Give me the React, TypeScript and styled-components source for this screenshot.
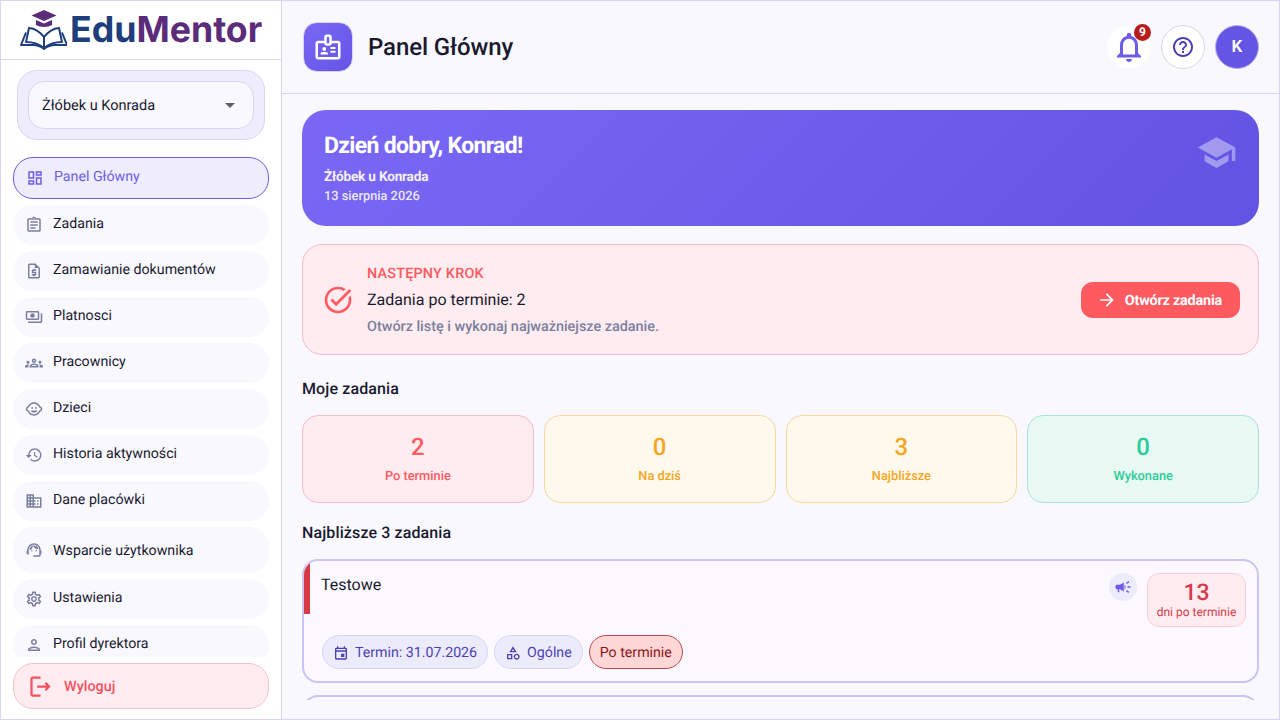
import React from "react";
import styled, { createGlobalStyle } from "styled-components";
import {
  MdOutlineDashboard,
  MdOutlineAssignment,
  MdOutlineRequestQuote,
  MdOutlinePayments,
  MdOutlineGroups,
  MdOutlineChildCare,
  MdOutlineHistory,
  MdBusiness,
  MdOutlineSupportAgent,
  MdOutlineSettings,
  MdOutlinePerson,
  MdOutlineLogout,
  MdOutlineBadge,
  MdOutlineNotifications,
  MdOutlineHelpOutline,
  MdSchool,
  MdOutlineTaskAlt,
  MdArrowForward,
  MdCampaign,
  MdOutlineEvent,
  MdOutlineCategory,
  MdArrowDropDown,
} from "react-icons/md";

const GlobalStyle = createGlobalStyle`
  html, body {
    margin: 0;
    padding: 0;
    height: 100%;
    overflow: hidden;
    background: #f9f8ff;
    font-family: Roboto, "Noto Sans", sans-serif;
    color: #1a1a2e;
    text-rendering: geometricPrecision;
  }
  * { box-sizing: border-box; }
`;

const Shell = styled.div`
  display: flex;
  width: 1280px;
  height: 720px;
  border: 1px solid #d8d5f3;
  overflow: hidden;
`;

const Sidebar = styled.aside`
  display: flex;
  flex-direction: column;
  flex: 0 0 281px;
  height: 100%;
  background: #fff;
  border-right: 1px solid #d8d5f3;
`;

const LogoBar = styled.div`
  display: flex;
  align-items: center;
  gap: 3px;
  height: 59px;
  padding-left: 18px;
  border-bottom: 1px solid #d8d5f3;
`;

const LogoText = styled.span`
  font-family: Inter, sans-serif;
  font-size: 35.7px;
  font-weight: 700;
  line-height: 1;
  color: #1f3f7c;
`;

const LogoAccent = styled.span`
  color: #5b2c7a;
`;

const SchoolBox = styled.div`
  margin: 10px 16px 0;
  padding: 10px;
  background: #efedfc;
  border: 1px solid #d8d5f3;
  border-radius: 20px;
`;

const SchoolSelect = styled.div`
  display: flex;
  align-items: center;
  justify-content: space-between;
  height: 48px;
  padding: 0 11px 0 13px;
  background: #f9f8ff;
  border: 1px solid #d8d5f3;
  border-radius: 16px;
  font-size: 14.5px;
  color: #1a1a2e;
  svg { color: #5f5f6b; }
`;

const Nav = styled.nav`
  display: flex;
  flex-direction: column;
  gap: 6px;
  height: 500px;
  margin-top: 17px;
  padding: 0 12px;
  overflow: hidden;
`;

const NavItem = styled.div<{ $active?: boolean; $tall?: boolean }>`
  display: flex;
  flex: 0 0 auto;
  align-items: center;
  gap: 10px;
  height: ${(p) => (p.$active ? 42 : p.$tall ? 46 : 40)}px;
  padding-left: 12px;
  border-radius: 20px;
  background: ${(p) => (p.$active ? "#efedfc" : "#f9f8ff")};
  border: ${(p) => (p.$active ? "1px solid #6c5ce7" : "none")};
  color: ${(p) => (p.$active ? "#6c5ce7" : "#1a1a2e")};
  font-size: 14.2px;
  svg {
    flex: 0 0 18px;
    color: ${(p) => (p.$active ? "#6c5ce7" : "#7b7f9e")};
  }
`;

const NavLabel = styled.span<{ $tall?: boolean }>`
  position: relative;
  top: ${(p) => (p.$tall ? 1 : -1)}px;
`;

const Logout = styled.div`
  display: flex;
  align-items: center;
  gap: 10px;
  height: 46px;
  margin: 6px 12px 0;
  padding-left: 13px;
  background: #feecf0;
  border: 1px solid #f5c2c9;
  border-radius: 20px;
  color: #f4525e;
  font-size: 14.4px;
  font-weight: 500;
`;

const Main = styled.main`
  display: flex;
  flex-direction: column;
  flex: 1;
  min-width: 0;
`;

const Header = styled.header`
  display: flex;
  flex: 0 0 93px;
  align-items: center;
  justify-content: space-between;
  padding: 0 20px 0 21px;
  border-bottom: 1px solid #d8d5f3;
`;

const TitleGroup = styled.div`
  display: flex;
  align-items: center;
  gap: 15px;
`;

const TitleIcon = styled.div`
  display: flex;
  align-items: center;
  justify-content: center;
  width: 50px;
  height: 50px;
  border-radius: 14px;
  background: linear-gradient(135deg, #7a68f5, #6555e5);
  border: 1px solid #d8d5f3;
  color: #fff;
`;

const Title = styled.h1`
  margin: 0;
  font-size: 24px;
  font-weight: 500;
  letter-spacing: -0.1px;
  color: #1a1a2e;
`;

const HeaderActions = styled.div`
  display: flex;
  align-items: center;
  gap: 10px;
`;

const RoundButton = styled.div<{ $bordered?: boolean }>`
  position: relative;
  display: flex;
  align-items: center;
  justify-content: center;
  width: 44px;
  height: 44px;
  border-radius: 50%;
  background: #fff;
  border: 1px solid ${(p) => (p.$bordered ? "#d8d5f3" : "#fff")};
  color: ${(p) => (p.$bordered ? "#4a3fb5" : "#6c5ce7")};
`;

const Badge = styled.span`
  position: absolute;
  top: -2px;
  right: -1px;
  width: 17px;
  height: 17px;
  border-radius: 50%;
  background: #b71c1c;
  color: #fff;
  font-size: 12px;
  font-weight: 700;
  line-height: 17px;
  text-align: center;
`;

const Avatar = styled.div`
  display: flex;
  align-items: center;
  justify-content: center;
  width: 44px;
  height: 44px;
  border-radius: 50%;
  background: #6555e5;
  border: 1px solid #b8b0f0;
  color: #fff;
  font-size: 17px;
  font-weight: 600;
`;

const Content = styled.div`
  display: flex;
  flex-direction: column;
  height: 590px;
  margin-top: 16px;
  padding: 0 20px;
  overflow: hidden;
`;

const Hero = styled.section`
  display: flex;
  flex: 0 0 116px;
  justify-content: space-between;
  padding: 21px 22px 20px;
  border-radius: 24px;
  background: linear-gradient(135deg, #7a68f5, #6353e3);
  color: #fff;
`;

const HeroTitle = styled.h2`
  margin: 0 0 7px;
  font-size: 23px;
  font-weight: 700;
  line-height: 30px;
  letter-spacing: -0.69px;
`;

const HeroLine = styled.div<{ $strong?: boolean }>`
  font-size: ${(p) => (p.$strong ? 13.6 : 12.8)}px;
  font-weight: ${(p) => (p.$strong ? 700 : 500)};
  line-height: 19px;
  letter-spacing: ${(p) => (p.$strong ? -0.2 : 0)}px;
  opacity: ${(p) => (p.$strong ? 0.92 : 0.85)};
`;

const HeroIcon = styled.div`
  margin: 1px 0 0 0;
  color: rgba(255, 255, 255, 0.4);
`;

const NextStep = styled.section`
  display: flex;
  flex: 0 0 111px;
  align-items: center;
  margin-top: 18px;
  padding: 0 18px 0 19px;
  background: #feecf0;
  border: 1px solid #f7bcc6;
  border-radius: 20px;
`;

const NextIcon = styled.div`
  display: flex;
  color: #ff5a5f;
`;

const NextBody = styled.div`
  flex: 1;
  margin-left: 13px;
  padding-top: 2px;
`;

const NextLabel = styled.div`
  font-size: 14.4px;
  font-weight: 500;
  letter-spacing: 0.2px;
  line-height: 20px;
  color: #ff5a5f;
`;

const NextTitle = styled.div`
  margin-top: 6px;
  font-size: 16px;
  line-height: 20px;
  color: #1a1a2e;
`;

const NextHint = styled.div`
  margin-top: 7px;
  font-size: 14.4px;
  font-weight: 500;
  line-height: 20px;
  color: #7b7f9e;
`;

const OpenButton = styled.div`
  display: flex;
  align-items: center;
  gap: 8px;
  height: 36px;
  padding: 1px 18px 0 16px;
  border-radius: 12px;
  background: #ff5a5f;
  color: #fff;
  font-size: 14.4px;
  font-weight: 700;
  letter-spacing: -0.2px;
`;

const SectionTitle = styled.h3<{ $top: number }>`
  margin: ${(p) => p.$top}px 0 15px;
  font-size: 16px;
  font-weight: 500;
  letter-spacing: 0.12px;
  line-height: 22px;
  color: #1a1a2e;
`;

const StatGrid = styled.div`
  display: grid;
  flex: 0 0 88px;
  grid-template-columns: repeat(4, 1fr);
  gap: 10px;
`;

const StatCard = styled.div<{ $bg: string; $line: string; $color: string }>`
  display: flex;
  flex-direction: column;
  align-items: center;
  padding-top: 17px;
  border-radius: 16px;
  background: ${(p) => p.$bg};
  border: 1px solid ${(p) => p.$line};
  color: ${(p) => p.$color};
`;

const StatValue = styled.div`
  font-size: 24px;
  font-weight: 500;
  line-height: 28px;
`;

const StatLabel = styled.div`
  margin-top: 8px;
  font-size: 12.8px;
  font-weight: 500;
  line-height: 16px;
`;

const TaskCard = styled.article`
  position: relative;
  flex: 0 0 124px;
  margin-bottom: 12px;
  padding: 12px 11px 0 17px;
  background: #fbf9ff;
  border: 2px solid #c9c4f2;
  border-radius: 16px;
  overflow: hidden;
`;

const TaskStripe = styled.span<{ $color: string }>`
  position: absolute;
  top: 0;
  left: 0;
  width: 6px;
  height: 53px;
  background: ${(p) => p.$color};
`;

const TaskTop = styled.div`
  display: flex;
  align-items: flex-start;
`;

const TaskName = styled.div`
  flex: 1;
  margin-top: 2px;
  font-size: 16px;
  line-height: 20px;
  color: #1a1a2e;
`;

const TaskKind = styled.div`
  display: flex;
  align-items: center;
  justify-content: center;
  width: 28px;
  height: 28px;
  margin-right: 10px;
  border-radius: 50%;
  background: #ecebfb;
  color: #6c5ce7;
`;

const Overdue = styled.div`
  display: flex;
  flex-direction: column;
  align-items: center;
  width: 99px;
  height: 54px;
  padding-top: 7px;
  background: #feecf0;
  border: 1px solid #f9ced3;
  border-radius: 12px;
  color: #d63a4a;
`;

const OverdueValue = styled.div`
  font-size: 23px;
  font-weight: 500;
  line-height: 24px;
`;

const OverdueLabel = styled.div`
  font-size: 12px;
  line-height: 14px;
`;

const ChipRow = styled.div`
  display: flex;
  gap: 6px;
  margin: 8px 0 0 1px;
`;

const Chip = styled.div<{ $danger?: boolean }>`
  display: flex;
  align-items: center;
  gap: 6px;
  height: 34px;
  padding: 1px 10px 0;
  border-radius: 17px;
  background: ${(p) => (p.$danger ? "#ffd6d6" : "#ecebfb")};
  border: 1px solid ${(p) => (p.$danger ? "#b8484d" : "#d8d5f3")};
  color: ${(p) => (p.$danger ? "#8e1414" : "#4a3fb5")};
  font-size: 14.2px;
`;

const navItems = [
  { label: "Zadania", icon: MdOutlineAssignment },
  { label: "Zamawianie dokumentów", icon: MdOutlineRequestQuote },
  { label: "Platnosci", icon: MdOutlinePayments },
  { label: "Pracownicy", icon: MdOutlineGroups },
  { label: "Dzieci", icon: MdOutlineChildCare },
  { label: "Historia aktywności", icon: MdOutlineHistory },
  { label: "Dane placówki", icon: MdBusiness },
  { label: "Wsparcie użytkownika", icon: MdOutlineSupportAgent, tall: true },
  { label: "Ustawienia", icon: MdOutlineSettings },
  { label: "Profil dyrektora", icon: MdOutlinePerson },
];

const stats = [
  { value: "2", label: "Po terminie", bg: "#feecf0", line: "#f7bcc6", color: "#ff5a5f" },
  { value: "0", label: "Na dziś", bg: "#fff8ec", line: "#f5d9a0", color: "#f5a623" },
  { value: "3", label: "Najbliższe", bg: "#fff8ec", line: "#f5d9a0", color: "#f5a623" },
  { value: "0", label: "Wykonane", bg: "#e8f8f3", line: "#a9e5d3", color: "#2ecc9a" },
];

const LogoMark = () => (
  <svg width="48" height="40" viewBox="0 0 48 40" fill="none">
    <path d="M25 0l12.500 5.500-12.500 5.500-12.500-5.500z" fill="#5b2c7a" />
    <path d="M17 10v5c4 2.500 12 2.500 16 0v-5l-8 3.500z" fill="#5b2c7a" />
    <path
      d="M25 27c-4-5-9-8.500-15-9l-3 14c7 0 13 2 18 6 5-4 11-6 18-6l-3-14c-6 .5-11 4-15 9zM25 27v11"
      stroke="#1f3f7c"
      strokeWidth="2"
      strokeLinejoin="round"
    />
    <path
      d="M7 22.500l-5 12.500h12c4 0 8 1.500 11 4 3-2.500 7-4 11-4h12l-5-12.500"
      stroke="#1f3f7c"
      strokeWidth="2"
      strokeLinejoin="round"
    />
  </svg>
);

export default function App() {
  return (
    <>
      <GlobalStyle />
      <Shell>
        <Sidebar>
          <LogoBar>
            <LogoMark />
            <LogoText>
              Edu<LogoAccent>Mentor</LogoAccent>
            </LogoText>
          </LogoBar>
          <SchoolBox>
            <SchoolSelect>
              Żłóbek u Konrada
              <MdArrowDropDown size={24} />
            </SchoolSelect>
          </SchoolBox>
          <Nav>
            <NavItem $active>
              <MdOutlineDashboard size={18} />
              <NavLabel>Panel Główny</NavLabel>
            </NavItem>
            {navItems.map(({ label, icon: Icon, tall }) => (
              <NavItem key={label} $tall={tall}>
                <Icon size={18} />
                <NavLabel $tall={tall}>{label}</NavLabel>
              </NavItem>
            ))}
          </Nav>
          <Logout>
            <MdOutlineLogout size={27} />
            Wyloguj
          </Logout>
        </Sidebar>
        <Main>
          <Header>
            <TitleGroup>
              <TitleIcon>
                <MdOutlineBadge size={30} />
              </TitleIcon>
              <Title>Panel Główny</Title>
            </TitleGroup>
            <HeaderActions>
              <RoundButton>
                <MdOutlineNotifications size={36} />
                <Badge>9</Badge>
              </RoundButton>
              <RoundButton $bordered>
                <MdOutlineHelpOutline size={24} />
              </RoundButton>
              <Avatar>K</Avatar>
            </HeaderActions>
          </Header>
          <Content>
            <Hero>
              <div>
                <HeroTitle>Dzień dobry, Konrad!</HeroTitle>
                <HeroLine $strong>Żłóbek u Konrada</HeroLine>
                <HeroLine>13 sierpnia 2026</HeroLine>
              </div>
              <HeroIcon>
                <MdSchool size={41} />
              </HeroIcon>
            </Hero>
            <NextStep>
              <NextIcon>
                <MdOutlineTaskAlt size={32} />
              </NextIcon>
              <NextBody>
                <NextLabel>NASTĘPNY KROK</NextLabel>
                <NextTitle>Zadania po terminie: 2</NextTitle>
                <NextHint>Otwórz listę i wykonaj najważniejsze zadanie.</NextHint>
              </NextBody>
              <OpenButton>
                <MdArrowForward size={20} />
                Otwórz zadania
              </OpenButton>
            </NextStep>
            <SectionTitle $top={23}>Moje zadania</SectionTitle>
            <StatGrid>
              {stats.map((s) => (
                <StatCard key={s.label} $bg={s.bg} $line={s.line} $color={s.color}>
                  <StatValue>{s.value}</StatValue>
                  <StatLabel>{s.label}</StatLabel>
                </StatCard>
              ))}
            </StatGrid>
            <SectionTitle $top={19}>Najbliższe 3 zadania</SectionTitle>
            <TaskCard>
              <TaskStripe $color="#d63a43" />
              <TaskTop>
                <TaskName>Testowe</TaskName>
                <TaskKind>
                  <MdCampaign size={18} />
                </TaskKind>
                <Overdue>
                  <OverdueValue>13</OverdueValue>
                  <OverdueLabel>dni po terminie</OverdueLabel>
                </Overdue>
              </TaskTop>
              <ChipRow>
                <Chip>
                  <MdOutlineEvent size={16} />
                  Termin: 31.07.2026
                </Chip>
                <Chip>
                  <MdOutlineCategory size={16} />
                  Ogólne
                </Chip>
                <Chip $danger>Po terminie</Chip>
              </ChipRow>
            </TaskCard>
            <TaskCard>
              <TaskStripe $color="#8e1414" />
            </TaskCard>
          </Content>
        </Main>
      </Shell>
    </>
  );
}
